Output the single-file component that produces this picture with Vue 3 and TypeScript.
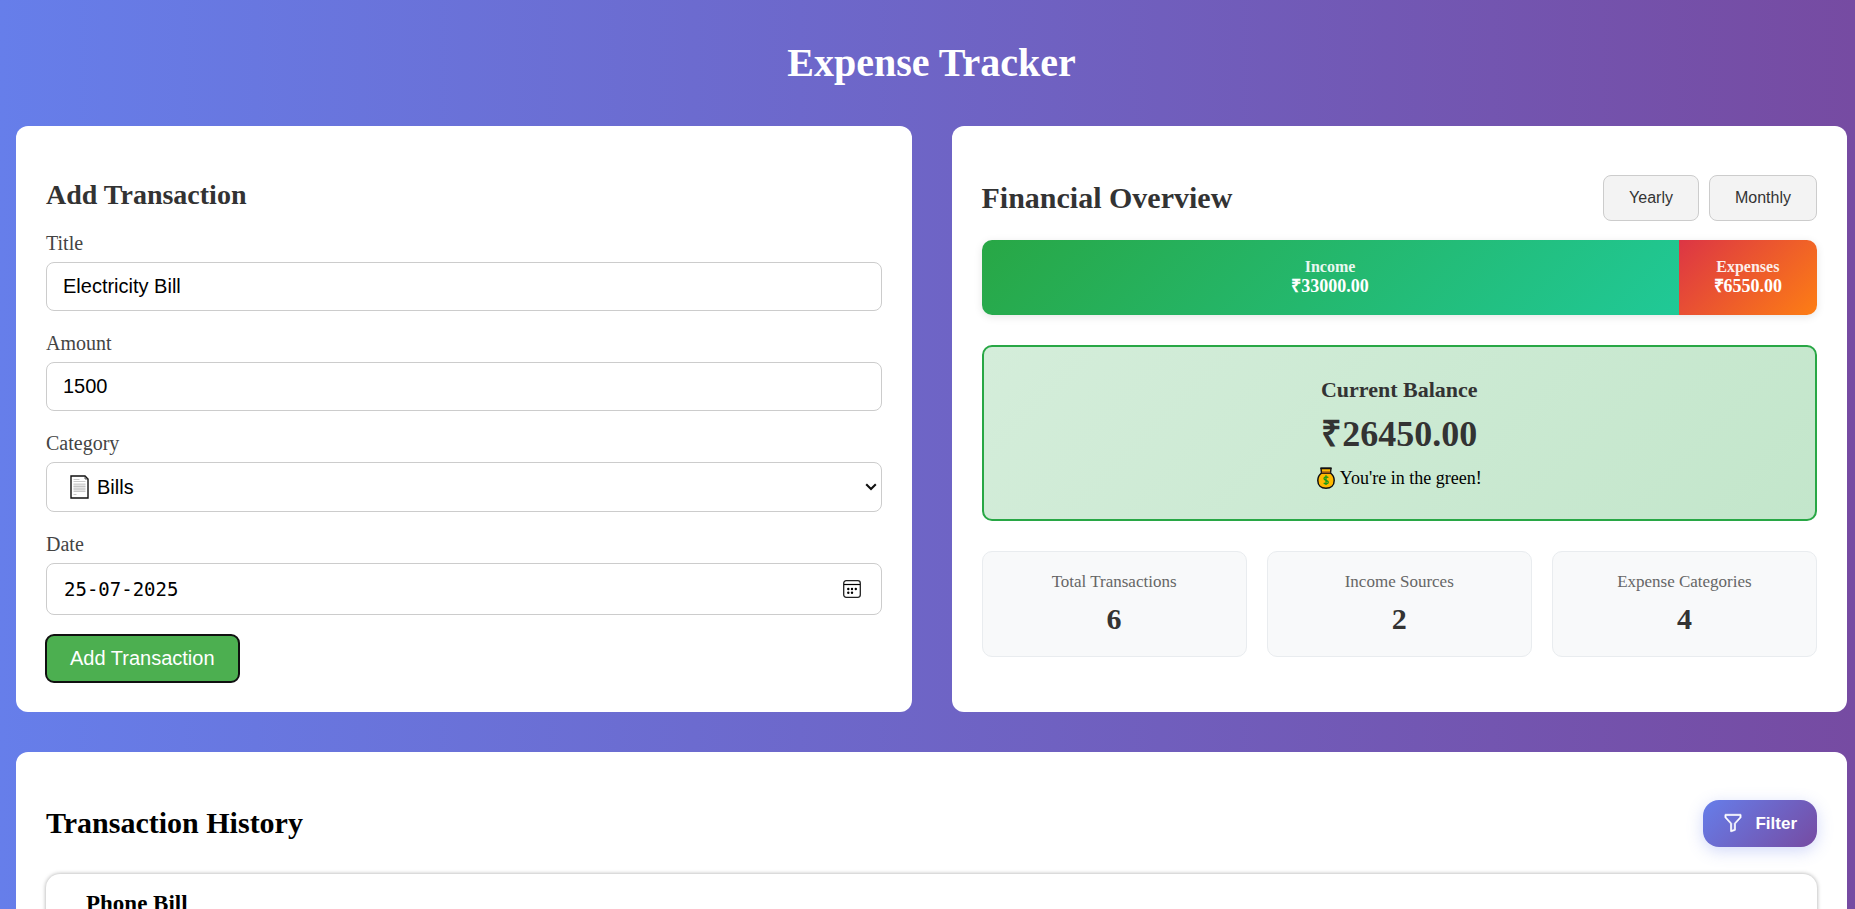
<script setup lang="ts">
import { computed, ref } from 'vue'

interface Stat {
  label: string
  value: number
}

const title = ref('Electricity Bill')
const amount = ref('1500')
const category = ref('bills')
const date = ref('25-07-2025')

const income = 33000
const expenses = 6550

const rupees = (value: number): string => `₹${value.toFixed(2)}`
const incomeShare = computed(() => `${(income / (income + expenses)) * 100}%`)

const stats: Stat[] = [
  { label: 'Total Transactions', value: 6 },
  { label: 'Income Sources', value: 2 },
  { label: 'Expense Categories', value: 4 },
]

const transactions = ['Phone Bill']
</script>

<template>
  <div class="page">
    <h1>Expense Tracker</h1>

    <main class="content">
      <section class="card">
        <h2 class="form-heading">Add Transaction</h2>
        <form class="form" @submit.prevent>
          <div class="field">
            <label for="title">Title</label>
            <input id="title" v-model="title" type="text" />
          </div>
          <div class="field">
            <label for="amount">Amount</label>
            <input id="amount" v-model="amount" type="text" inputmode="decimal" />
          </div>
          <div class="field">
            <label for="category">Category</label>
            <div class="control">
              <select id="category" v-model="category">
                <option value="bills">Bills</option>
              </select>
              <svg class="page-icon" viewBox="0 0 19 24" aria-hidden="true">
                <path d="M1 1h14l3 3v19H1z" fill="#fff" stroke="#111" stroke-width="1.4" />
                <path d="M15 1v3h3" fill="none" stroke="#333" stroke-width=".8" />
                <path d="M3.500 9h12v7h-12z" fill="#e4e4e4" />
                <path d="M3.500 4.500h6M3.500 6.500h12M3.500 9h12M3.500 11.500h12M3.500 14h12M3.500 16.500h12M3.500 19.500h3" stroke="#bdbdbd" stroke-width=".8" />
              </svg>
              <svg class="chevron" viewBox="0 0 12 8" aria-hidden="true">
                <path d="M1.200 1.300 6 6l4.800-4.700" fill="none" stroke="#111" stroke-width="2.100" />
              </svg>
            </div>
          </div>
          <div class="field">
            <label for="date">Date</label>
            <div class="control">
              <input id="date" v-model="date" class="date" type="text" />
              <button class="calendar" type="button" aria-label="Open calendar">
                <svg viewBox="0 0 18 18" aria-hidden="true">
                  <rect x=".7" y=".7" width="16.600" height="16.600" rx="2.500" fill="none" stroke="#222" stroke-width="1.300" />
                  <path d="M1 4.500h16" stroke="#000" stroke-width="1.200" />
                  <g fill="#000">
                    <circle cx="5.300" cy="9" r="1.200" />
                    <circle cx="9" cy="9" r="1.200" />
                    <circle cx="12.800" cy="9" r="1.200" />
                    <circle cx="5.300" cy="12.800" r="1.200" />
                    <circle cx="9" cy="12.800" r="1.200" />
                  </g>
                </svg>
              </button>
            </div>
          </div>
          <button class="submit" type="submit">Add Transaction</button>
        </form>
      </section>

      <section class="card">
        <header class="card-header">
          <h2 class="overview-heading">Financial Overview</h2>
          <div class="periods">
            <button class="period" type="button">Yearly</button>
            <button class="period" type="button">Monthly</button>
          </div>
        </header>

        <div class="bar">
          <div class="segment income" :style="{ width: incomeShare }">
            <span class="segment-label">Income</span>
            <span>{{ rupees(income) }}</span>
          </div>
          <div class="segment expense">
            <span class="segment-label">Expenses</span>
            <span>{{ rupees(expenses) }}</span>
          </div>
        </div>

        <div class="balance">
          <h3>Current Balance</h3>
          <div class="balance-amount">{{ rupees(income - expenses) }}</div>
          <div class="message">
            <svg viewBox="0 0 18 22" aria-hidden="true">
              <path d="M4.500 6C2 8 .8 10.500.8 13.500c0 4.700 3.200 7.700 8.200 7.700s8.200-3 8.200-7.700c0-3-1.200-5.500-3.700-7.500z" fill="#ffb900" stroke="#111" stroke-width="1.500" />
              <path d="M4.500 5.800 4 1.500h10l-.5 4.300z" fill="#ffb900" stroke="#111" stroke-width="1.400" />
              <path d="M3.500 1.200h11" stroke="#111" stroke-width="1.600" />
              <path d="M4.800 5.300h8.400" stroke="#9a5518" stroke-width="1.800" />
              <path d="M11.300 10.700C10.500 9.500 7 9.400 7 11.400c0 2.300 4.300 1.500 4.300 3.900 0 2-3.600 2-4.500.6M9 8.300v9.800" fill="none" stroke="#159a18" stroke-width="1.300" />
            </svg>
            <span>You're in the green!</span>
          </div>
        </div>

        <div class="stats">
          <div v-for="stat in stats" :key="stat.label" class="stat">
            <div class="stat-label">{{ stat.label }}</div>
            <div class="stat-value">{{ stat.value }}</div>
          </div>
        </div>
      </section>

      <section class="card history">
        <header class="card-header">
          <h2>Transaction History</h2>
          <button class="filter" type="button">
            <svg viewBox="0 0 16 16" aria-hidden="true">
              <path
                fill="currentColor"
                stroke="currentColor"
                stroke-width=".5"
                d="M1.500 1.500A.5.5 0 0 1 2 1h12a.5.5 0 0 1 .5.5v2a.5.5 0 0 1-.128.334L10 8.692V13.500a.5.5 0 0 1-.342.474l-3 1A.5.5 0 0 1 6 14.500V8.692L1.628 3.834A.5.5 0 0 1 1.500 3.500zm1 .5v1.308l4.372 4.858A.5.5 0 0 1 7 8.500v5.306l2-.666V8.500a.5.5 0 0 1 .128-.334L13.500 3.308V2z"
              />
            </svg>
            <span>Filter</span>
          </button>
        </header>
        <ul class="transactions">
          <li v-for="name in transactions" :key="name">
            <h3>{{ name }}</h3>
          </li>
        </ul>
      </section>
    </main>
  </div>
</template>

<style>
html {
  scrollbar-width: none;
}
body {
  margin: 0;
}
</style>

<style scoped>
* {
  box-sizing: border-box;
}
.page {
  min-height: 100vh;
  padding: 40px 8px 40px 16px;
  background: linear-gradient(90deg, #667eea, #764ba2);
  font-family: "Liberation Serif", "Times New Roman", serif;
  color: #000;
}
h1,
h2,
h3 {
  margin: 0;
}
h1 {
  margin-bottom: 40px;
  font-size: 40px;
  line-height: 46px;
  text-align: center;
  color: #fff;
}
.content {
  display: grid;
  grid-template-columns: repeat(2, minmax(0, 1fr));
  gap: 40px;
}
.card {
  padding: 30px;
  border-radius: 12px;
  background: #fff;
}
.history {
  grid-column: 1 / -1;
}
.form-heading {
  margin: 23px 0 20px;
  font-size: 28px;
  line-height: 32px;
  color: #333;
}
.form {
  display: flex;
  flex-direction: column;
  align-items: flex-start;
  gap: 20px;
}
.field {
  display: flex;
  flex-direction: column;
  gap: 6px;
  width: 100%;
}
label {
  font-size: 20px;
  line-height: 25px;
  color: #444;
}
input,
select {
  width: 100%;
  height: 49px;
  padding: 12px 16px;
  border: 1px solid #ccc;
  border-radius: 8px;
  background: #fff;
  font-family: "Liberation Sans", Arial, sans-serif;
  font-size: 20px;
  color: #000;
}
.control {
  position: relative;
  display: flex;
}
select {
  height: 50px;
  padding: 0 24px 0 50px;
  appearance: none;
}
.page-icon {
  position: absolute;
  left: 24px;
  top: 13px;
  width: 19px;
  height: 24px;
  pointer-events: none;
}
.chevron {
  position: absolute;
  top: 21px;
  right: 5px;
  width: 12px;
  height: 8px;
  pointer-events: none;
}
input.date {
  height: 52px;
  padding-left: 17px;
  font-family: "DejaVu Sans Mono", monospace;
  font-size: 19px;
}
.calendar {
  position: absolute;
  top: 17px;
  right: 21px;
  width: 18px;
  height: 18px;
  padding: 0;
  border: 0;
  background: none;
}
.calendar svg {
  display: block;
}
.submit {
  padding: 12px 24px;
  border: 0;
  border-radius: 8px;
  outline: 2px solid #101010;
  outline-offset: -1px;
  background: #4caf50;
  font-family: "Liberation Sans", Arial, sans-serif;
  font-size: 20px;
  line-height: 23px;
  color: #fff;
}
.card-header {
  display: flex;
  align-items: center;
  justify-content: space-between;
  height: 84px;
}
.history .card-header {
  height: 82px;
}
.card-header h2 {
  font-size: 30px;
  line-height: 34px;
}
.overview-heading {
  color: #333;
}
.periods {
  display: flex;
  gap: 10px;
}
.period {
  padding: 12px 25px;
  border: 1px solid #ccc;
  border-radius: 8px;
  background: #f3f3f3;
  font-family: "Liberation Sans", Arial, sans-serif;
  font-size: 16px;
  line-height: 20px;
  color: #333;
}
.bar {
  display: flex;
  height: 75px;
  margin-bottom: 30px;
  border-radius: 10px;
  overflow: hidden;
  box-shadow: 0 2px 8px rgba(0, 0, 0, 0.1);
}
.segment {
  display: flex;
  flex-direction: column;
  align-items: center;
  justify-content: center;
  padding-bottom: 2px;
  font-size: 18px;
  font-weight: bold;
  line-height: 20px;
  color: #fff;
}
.segment-label {
  font-size: 16px;
  line-height: 18px;
  opacity: 0.9;
}
.income {
  background: linear-gradient(135deg, #28a745, #20c997);
}
.expense {
  flex: 1;
  background: linear-gradient(135deg, #dc3545, #fd7e14);
}
.balance {
  margin-bottom: 30px;
  padding: 30px;
  border: 2px solid #28a745;
  border-radius: 10px;
  background: linear-gradient(135deg, #d4edda, #c3e6cb);
  text-align: center;
}
.balance h3 {
  margin-bottom: 12px;
  font-size: 22px;
  line-height: 25px;
  color: #333;
}
.balance-amount {
  margin-bottom: 12px;
  font-size: 36px;
  font-weight: bold;
  line-height: 41px;
  color: #333;
}
.message {
  display: flex;
  align-items: center;
  justify-content: center;
  gap: 5px;
  font-size: 18px;
  line-height: 22px;
}
.message svg {
  width: 18px;
  height: 22px;
}
.stats {
  display: grid;
  grid-template-columns: repeat(3, 1fr);
  gap: 20px;
}
.stat {
  padding: 20px;
  border: 1px solid #e9ecef;
  border-radius: 10px;
  background: #f8f9fa;
  text-align: center;
}
.stat-label {
  margin-bottom: 10px;
  font-size: 17px;
  line-height: 20px;
  color: #666;
}
.stat-value {
  font-size: 30px;
  font-weight: bold;
  line-height: 34px;
  color: #333;
}
.filter {
  display: flex;
  align-items: center;
  gap: 12px;
  padding: 13px 20px;
  border: 0;
  border-radius: 16px;
  background: linear-gradient(135deg, #667eea, #764ba2);
  box-shadow: 0 4px 16px rgba(102, 126, 234, 0.3);
  font-family: "Liberation Sans", Arial, sans-serif;
  font-size: 17px;
  font-weight: bold;
  line-height: 21px;
  color: #fff;
}
.filter svg {
  width: 20px;
  height: 20px;
}
.transactions {
  margin: 10px 0 0;
  padding: 0;
  list-style: none;
}
.transactions li {
  padding: 16px 40px;
  border-radius: 14px;
  background: #fff;
  box-shadow: 0 0 4px rgba(0, 0, 0, 0.35);
}
.transactions h3 {
  font-size: 23px;
  line-height: 28px;
}
</style>
